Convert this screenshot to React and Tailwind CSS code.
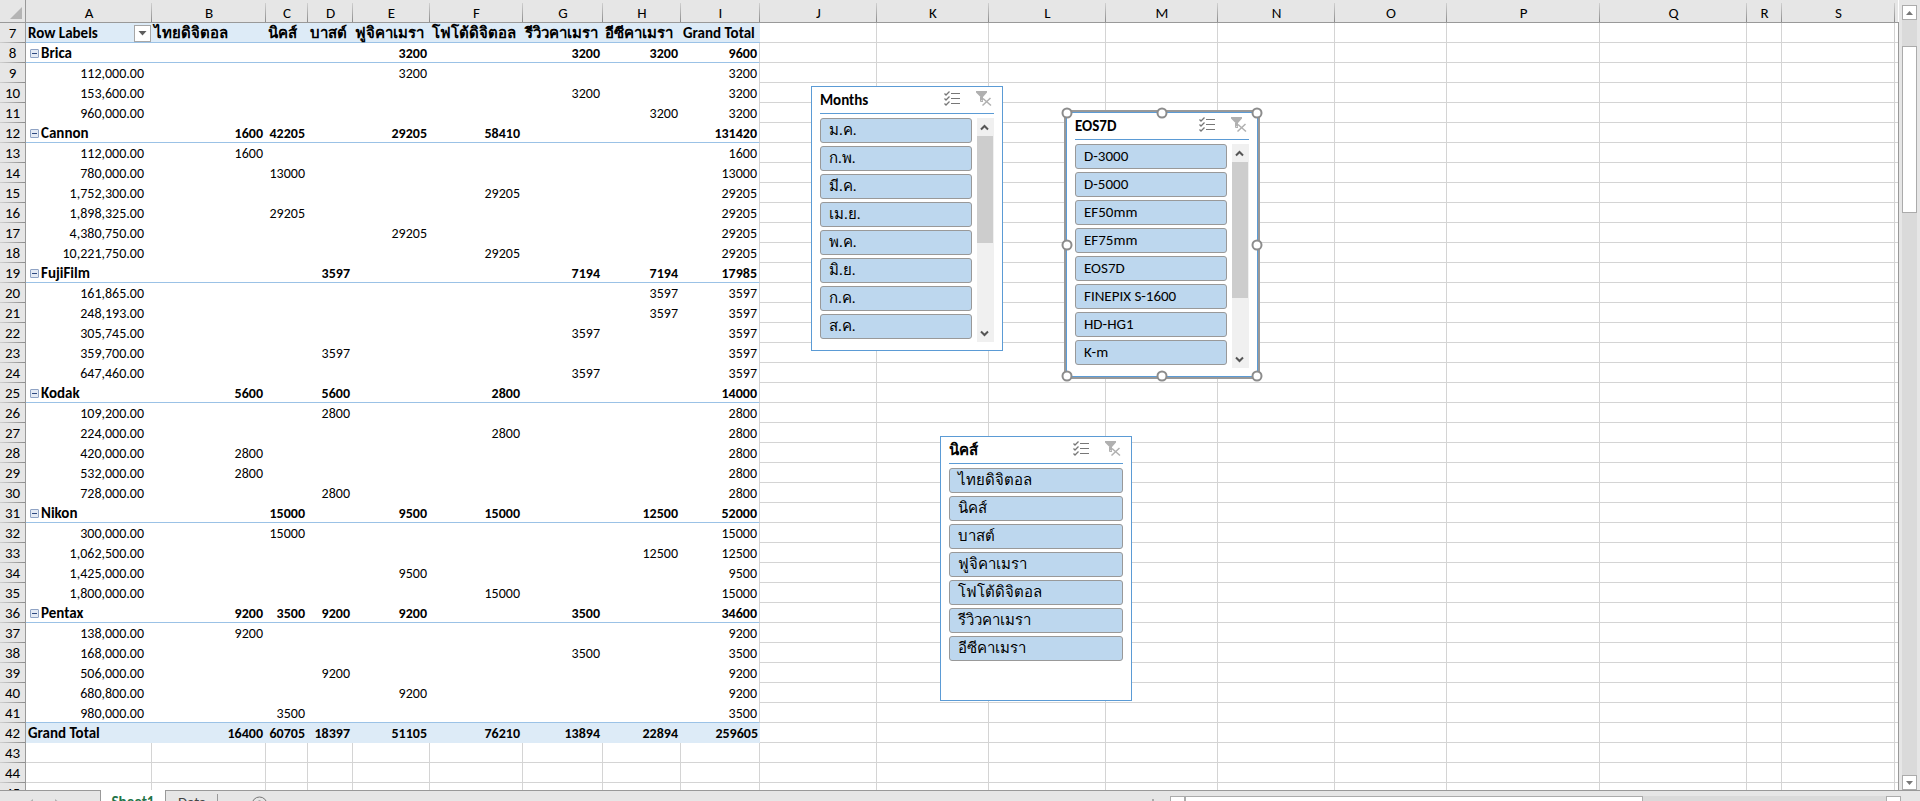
const COLUMNS = [
  ["A", "w-[126px]"],
  ["B", "w-[114px]"],
  ["C", "w-[42px]"],
  ["D", "w-[45px]"],
  ["E", "w-[77px]"],
  ["F", "w-[93px]"],
  ["G", "w-[80px]"],
  ["H", "w-[78px]"],
  ["I", "w-[79px]"],
  ["J", "w-[117px]"],
  ["K", "w-[112px]"],
  ["L", "w-[117px]"],
  ["M", "w-[112px]"],
  ["N", "w-[117px]"],
  ["O", "w-[112px]"],
  ["P", "w-[153px]"],
  ["Q", "w-[147px]"],
  ["R", "w-[35px]"],
  ["S", "w-[113px]"],
  ["", ""],
];

const PRODUCTS = ["ไทยดิจิตอล", "นิคส์", "บาสต์", "ฟูจิคาเมรา", "โฟโต้ดิจิตอล", "รีวิวคาเมรา", "อีซีคาเมรา"];
const MONTHS = ["ม.ค.", "ก.พ.", "มี.ค.", "เม.ย.", "พ.ค.", "มิ.ย.", "ก.ค.", "ส.ค."];
const MODELS = ["D-3000", "D-5000", "EF50mm", "EF75mm", "EOS7D", "FINEPIX S-1600", "HD-HG1", "K-m"];

// [kind, label, values for columns B to I]
const ROWS = [
  ["head", "Row Labels", [...PRODUCTS, "Grand Total"]],
  ["group", "Brica", ["", "", "", 3200, "", 3200, 3200, 9600]],
  ["item", "112,000.00", ["", "", "", 3200, "", "", "", 3200]],
  ["item", "153,600.00", ["", "", "", "", "", 3200, "", 3200]],
  ["item", "960,000.00", ["", "", "", "", "", "", 3200, 3200]],
  ["group", "Cannon", [1600, 42205, "", 29205, 58410, "", "", 131420]],
  ["item", "112,000.00", [1600, "", "", "", "", "", "", 1600]],
  ["item", "780,000.00", ["", 13000, "", "", "", "", "", 13000]],
  ["item", "1,752,300.00", ["", "", "", "", 29205, "", "", 29205]],
  ["item", "1,898,325.00", ["", 29205, "", "", "", "", "", 29205]],
  ["item", "4,380,750.00", ["", "", "", 29205, "", "", "", 29205]],
  ["item", "10,221,750.00", ["", "", "", "", 29205, "", "", 29205]],
  ["group", "FujiFilm", ["", "", 3597, "", "", 7194, 7194, 17985]],
  ["item", "161,865.00", ["", "", "", "", "", "", 3597, 3597]],
  ["item", "248,193.00", ["", "", "", "", "", "", 3597, 3597]],
  ["item", "305,745.00", ["", "", "", "", "", 3597, "", 3597]],
  ["item", "359,700.00", ["", "", 3597, "", "", "", "", 3597]],
  ["item", "647,460.00", ["", "", "", "", "", 3597, "", 3597]],
  ["group", "Kodak", [5600, "", 5600, "", 2800, "", "", 14000]],
  ["item", "109,200.00", ["", "", 2800, "", "", "", "", 2800]],
  ["item", "224,000.00", ["", "", "", "", 2800, "", "", 2800]],
  ["item", "420,000.00", [2800, "", "", "", "", "", "", 2800]],
  ["item", "532,000.00", [2800, "", "", "", "", "", "", 2800]],
  ["item", "728,000.00", ["", "", 2800, "", "", "", "", 2800]],
  ["group", "Nikon", ["", 15000, "", 9500, 15000, "", 12500, 52000]],
  ["item", "300,000.00", ["", 15000, "", "", "", "", "", 15000]],
  ["item", "1,062,500.00", ["", "", "", "", "", "", 12500, 12500]],
  ["item", "1,425,000.00", ["", "", "", 9500, "", "", "", 9500]],
  ["item", "1,800,000.00", ["", "", "", "", 15000, "", "", 15000]],
  ["group", "Pentax", [9200, 3500, 9200, 9200, "", 3500, "", 34600]],
  ["item", "138,000.00", [9200, "", "", "", "", "", "", 9200]],
  ["item", "168,000.00", ["", "", "", "", "", 3500, "", 3500]],
  ["item", "506,000.00", ["", "", 9200, "", "", "", "", 9200]],
  ["item", "680,800.00", ["", "", "", 9200, "", "", "", 9200]],
  ["last", "980,000.00", ["", 3500, "", "", "", "", "", 3500]],
  ["total", "Grand Total", [16400, 60705, 18397, 51105, 76210, 13894, 22894, 259605]],
  ["blank", "", []],
  ["blank", "", []],
  ["blank", "", []],
];

const ROW_STYLES = {
  head: "bg-[#ddebf7] border-b border-[#9bc2e6] font-bold",
  group: "border-b border-[#9bc2e6] font-bold",
  item: "",
  last: "border-b border-[#9bc2e6]",
  total: "bg-[#ddebf7] font-bold",
  blank: "border-b border-r border-[#d4d4d4]",
};

const EMPTY_COLUMNS = COLUMNS.slice(9);

function LabelCell({ kind, label }) {
  if (kind === "head") {
    return (
      <div className="flex h-[17px] items-center justify-between pr-px pl-0.5 text-[15px]">
        {label}
        <button aria-label="Filter row labels" className="flex size-[17px] items-center justify-center border border-[#a6a6a6] bg-white">
          <svg width="9" height="5" viewBox="0 0 9 5" fill="#5e5e5e"><path d="M0.5 0h8L4.500 4.500z" /></svg>
        </button>
      </div>
    );
  }
  if (kind === "group") {
    return (
      <div className="flex items-center gap-[2px] pl-1 text-[15px]">
        <button aria-label={"Collapse " + label} className="flex size-[9px] items-center justify-center rounded-[1px] border border-[#8fa3c4] bg-[#e4eaf4]">
          <span className="h-px w-[5px] bg-[#2f4a80]" />
        </button>
        {label}
      </div>
    );
  }
  if (kind === "total") return <div className="pl-0.5 text-[15px]">{label}</div>;
  return <div className="pr-2 text-right">{label}</div>;
}

function valueAlignment(kind, isLast) {
  if (kind === "head") return " pl-0.5 text-left text-[15px]";
  return isLast ? " pr-0.5 text-right" : " pr-[3px] text-right";
}

function Row({ number, kind, label, values }) {
  const style = ROW_STYLES[kind];
  const cells = kind === "blank" ? Array(8).fill("") : values;
  return (
    <tr>
      <th scope="row" className="h-5 border-r border-[#999] bg-[#e6e6e6] bg-[linear-gradient(to_right,#d0d0d0,#8c8c8c)] bg-[length:100%_1px] bg-[position:left_bottom] bg-no-repeat p-0 text-center text-[15px] leading-[19px] font-normal">
        {number}
      </th>
      <td className={"h-5 p-0 pt-0.5 align-top leading-[17px] whitespace-nowrap " + style}>
        <LabelCell kind={kind} label={label} />
      </td>
      {cells.map((value, i) => (
        <td
          key={i}
          className={
            "h-5 p-0 pt-0.5 align-top leading-[17px] whitespace-nowrap " +
            style +
            valueAlignment(kind, i === 7) +
            (i === 7 && ["group", "item", "last"].includes(kind) ? " border-r border-r-[#d4d4d4]" : "")
          }
        >
          {value}
        </td>
      ))}
      {EMPTY_COLUMNS.map(([name], i) => (
        <td key={i} className={"h-5 border-b border-[#d4d4d4] p-0 " + (name ? "border-r" : "")} />
      ))}
    </tr>
  );
}

function Sheet() {
  return (
    <table className="w-full table-fixed border-separate border-spacing-0 text-[14px]">
      <colgroup>
        <col className="w-[26px]" />
        {COLUMNS.map(([name, width]) => <col key={name} className={width} />)}
      </colgroup>
      <thead>
        <tr>
          <th className="h-[23px] border-r border-b border-[#999] bg-[#e6e6e6] p-0">
            <button aria-label="Select all" className="flex w-full justify-end pt-1 pr-[3px]">
              <svg width="12" height="12" viewBox="0 0 12 12" fill="#b4b4b4"><path d="M12 0v12H0z" /></svg>
            </button>
          </th>
          {COLUMNS.map(([name]) => (
            <th
              key={name}
              scope="col"
              className={
                "h-[23px] border-b border-[#999] bg-[#e6e6e6] p-0 pt-[3px] text-center text-[15px] leading-[18px] font-normal " +
                (name ? "bg-[linear-gradient(#d0d0d0,#8c8c8c)] bg-[length:1px_19px] bg-[position:right_bottom] bg-no-repeat" : "")
              }
            >
              {name}
            </th>
          ))}
        </tr>
      </thead>
      <tbody>
        {ROWS.map(([kind, label, values], i) => (
          <Row key={i} number={i + 7} kind={kind} label={label} values={values} />
        ))}
      </tbody>
    </table>
  );
}

function MultiSelectIcon() {
  return (
    <svg width="17" height="16" viewBox="0 0 17 16" fill="none" stroke="#777">
      <path d="M7 2.500h9M7 7.500h9M7 12.500h9" />
      <path d="M0.500 2.500l1.500 1.500l3.500 -3.500M0.500 7.500l1.500 1.500l3.500 -3.500M0.500 12.500l1.500 1.500l3.500 -3.500" strokeWidth="1.300" />
    </svg>
  );
}

function ClearFilterIcon() {
  return (
    <svg width="16" height="16" viewBox="0 0 16 16" fill="none">
      <path d="M0 0h11v1.500L7 6v4L4.500 9V6L0 1.500z" fill="#b0b0b0" />
      <path d="M4.500 6v4.500H7" stroke="#b0b0b0" />
      <path d="M7 7.500l8 7M14.500 7L6.500 14.500" stroke="#b0b0b0" strokeWidth="1.500" />
    </svg>
  );
}

function Chevron({ up }) {
  return (
    <svg width="9" height="7" viewBox="0 0 9 7" fill="none" stroke="#555" strokeWidth="2">
      <path d={up ? "M1 5.500L4.500 2L8 5.500" : "M1 1.500L4.500 5L8 1.500"} />
    </svg>
  );
}

function SlicerScrollbar({ thumb }) {
  return (
    <div className="flex w-[17px] shrink-0 flex-col bg-[#f0f0f0]">
      <button aria-label="Scroll up" className="flex h-[18px] items-center justify-center pr-0.5"><Chevron up /></button>
      <div className="flex-1">
        <div className={"w-4 bg-[#cdcdcd] " + thumb} />
      </div>
      <button aria-label="Scroll down" className="flex h-[18px] items-center justify-center pr-0.5"><Chevron /></button>
    </div>
  );
}

function Slicer({ title, items, place, thumb, selected }) {
  return (
    <section className={"absolute flex h-[265px] w-[192px] flex-col border border-[#5b9bd5] bg-white px-2 pb-2 " + place + (selected ? " outline-2 outline-[#999]" : "")}>
      <header className="flex h-[27px] shrink-0 items-center border-b border-[#5b9bd5] text-[15px]">
        <h2 className="flex-1 font-bold">{title}</h2>
        <button aria-label="Multi-select" className="mr-[15px] pb-0.5"><MultiSelectIcon /></button>
        <button aria-label="Clear filter" className="mr-[2px] pb-0.5"><ClearFilterIcon /></button>
      </header>
      <div className="mt-1 flex flex-1 gap-[5px]">
        <ul className="flex flex-1 flex-col gap-[3px]">
          {items.map((item) => (
            <li key={item} className="flex">
              <button className="h-[25px] w-full rounded-[3px] border border-[#999] bg-[#bdd7ee] px-2 pb-px text-left text-[15px] leading-[22px]">
                {item}
              </button>
            </li>
          ))}
        </ul>
        {thumb && <SlicerScrollbar thumb={thumb} />}
      </div>
      {selected && HANDLES.map((spot) => (
        <span key={spot} className={"absolute size-[11px] -translate-x-1/2 -translate-y-1/2 rounded-full border-2 border-[#8c8c8c] bg-white " + spot} />
      ))}
    </section>
  );
}

const HANDLES = [
  "top-0 left-0",
  "top-0 left-1/2",
  "top-0 left-full",
  "top-1/2 left-0",
  "top-1/2 left-full",
  "top-full left-0",
  "top-full left-1/2",
  "top-full left-full",
];

function PageScrollbar() {
  return (
    <div className="flex w-[21px] shrink-0 flex-col items-center bg-[#e6e6e6] pt-[5px]">
      <button aria-label="Scroll up" className="flex h-[15px] w-[15px] items-center justify-center border border-[#ababab] bg-white">
        <svg width="7" height="4" viewBox="0 0 7 4" fill="#777"><path d="M3.500 0L7 4H0z" /></svg>
      </button>
      <div className="w-[15px] flex-1 bg-[#dadada] pt-[26px]">
        <div className="h-[167px] border border-[#ababab] bg-white" />
      </div>
      <button aria-label="Scroll down" className="flex h-[15px] w-[15px] items-center justify-center border border-[#ababab] bg-white">
        <svg width="7" height="4" viewBox="0 0 7 4" fill="#777"><path d="M0 0h7L3.500 4z" /></svg>
      </button>
    </div>
  );
}

function TabBar() {
  return (
    <footer className="flex h-[11px] shrink-0 overflow-hidden bg-[#e6e6e6] text-[15px] leading-[18px]">
      <div className="flex w-[101px] shrink-0 items-start gap-[22px] border-t border-r border-[#999] pt-[8px] pl-[28px]">
        <svg width="5" height="8" viewBox="0 0 5 8" fill="#b0b0b0"><path d="M5 0v8L0 4z" /></svg>
        <svg width="5" height="8" viewBox="0 0 5 8" fill="#b0b0b0"><path d="M0 0v8l5 -4z" /></svg>
      </div>
      <button className="flex w-16 shrink-0 items-start justify-center bg-white pt-[3px] font-bold text-[#217346]">Sheet1</button>
      <div className="flex flex-1 items-start border-t border-l border-[#999]">
        <button className="w-[51px] shrink-0 pt-0.5 pl-3 text-left text-[#444]">Data</button>
        <span className="mt-[3px] h-5 w-px bg-[#999]" />
        <button aria-label="New sheet" className="mt-[5px] ml-[33px]">
          <svg width="17" height="17" viewBox="0 0 17 17" fill="none" stroke="#777"><circle cx="8.500" cy="8.500" r="7.500" /><path d="M8.500 4.500v8M4.500 8.500h8" strokeWidth="2" /></svg>
        </button>
      </div>
      <div className="flex w-[771px] shrink-0 items-start border-t border-[#999]">
        <span className="mt-2 mr-4 ml-[3px] h-4 w-[2px] bg-[#aaa]" />
        <button aria-label="Scroll left" className="mt-[5px] h-[15px] w-[15px] border border-[#ababab] bg-white" />
        <div className="mt-[5px] flex h-[15px] flex-1 bg-[#dadada]">
          <div className="w-[458px] border border-[#ababab] bg-white" />
        </div>
        <button aria-label="Scroll right" className="mt-[5px] mr-[19px] h-[15px] w-[15px] border border-[#ababab] bg-white" />
      </div>
    </footer>
  );
}

export default function App() {
  return (
    <main className="flex h-screen flex-col overflow-hidden bg-white font-['Calibri','Carlito','Lato',sans-serif] text-black">
      <div className="flex min-h-0 flex-1">
        <div className="relative min-w-0 flex-1 overflow-hidden">
          <Sheet />
          <Slicer title="Months" items={MONTHS} place="top-[86px] left-[811px]" thumb="h-[107px]" />
          <Slicer title="EOS7D" items={MODELS} place="top-[112px] left-[1066px]" thumb="h-[136px]" selected />
          <Slicer title="นิคส์" items={PRODUCTS} place="top-[436px] left-[940px]" />
        </div>
        <div className="mt-[22px] w-px bg-[#999]" />
        <PageScrollbar />
      </div>
      <TabBar />
    </main>
  );
}
